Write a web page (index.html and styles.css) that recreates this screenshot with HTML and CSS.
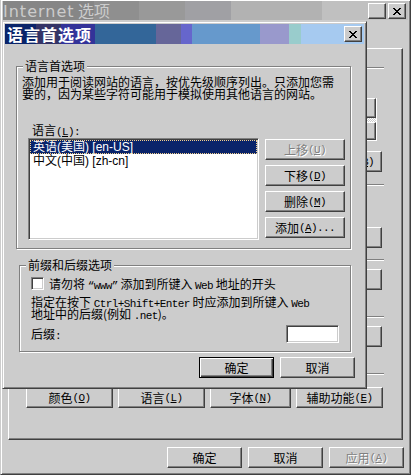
FILE: index.html
```html
<!DOCTYPE html>
<html lang="zh-CN">
<head>
    <meta charset="UTF-8">
    <meta name="viewport" content="width=device-width,initial-scale=1.0">
    <title>Internet 选项</title>
    <link rel="stylesheet" href="styles.css">
</head>
<body>
    <div class="window">
        <div class="caption inactive">
            <span class="caption-text"><span class="latin">Internet</span> 选项</span>
            <div class="caption-buttons">
                <button class="caption-btn help">?</button>
                <button class="caption-btn">
                    <svg class="x-glyph" width="8" height="7" viewBox="0 0 8 7"><path d="M0 0h2v1H0zM6 0h2v1H6zM1 1h2v1H1zM5 1h2v1H5zM2 2h4v1H2zM3 3h2v1H3zM2 4h4v1H2zM1 5h2v1H1zM5 5h2v1H5zM0 6h2v1H0zM6 6h2v1H6z"/></svg>
                </button>
            </div>
        </div>

        <!-- tab strip sits under the language dialog -->
        <div class="tabs"></div>

        <div class="tab-page">
            <div class="etch sep-home"></div>
            <div class="spin">
                <span class="spin-btn"></span>
                <span class="spin-track"></span>
                <span class="spin-btn down"></span>
            </div>
            <button class="btn page-btn btn-blank">使用空白页<span class="en">(<u>B</u>)</span></button>
            <div class="etch sep-files"></div>
            <button class="btn page-btn btn-settings"></button>
            <div class="etch sep-history"></div>
            <button class="btn page-btn btn-near"></button>
            <div class="etch sep-wide"></div>
            <button class="btn page-btn btn-near"></button>
            <div class="etch sep-wide"></div>
            <div class="page-buttons">
                <button class="btn w87">颜色<span class="en">(<u>O</u>)</span></button>
                <button class="btn w87">语言<span class="en">(<u>L</u>)</span></button>
                <button class="btn w81">字体<span class="en">(<u>N</u>)</span></button>
                <button class="btn w87">辅助功能<span class="en">(<u>E</u>)</span></button>
            </div>
        </div>

        <div class="window-buttons">
            <button class="btn w75">确定</button>
            <button class="btn w75">取消</button>
            <button class="btn w75" disabled>应用<span class="en">(<u>A</u>)</span></button>
        </div>

        <div class="dialog">
            <div class="caption active">
                <span class="caption-text">语言首选项</span>
                <button class="caption-btn">
                    <svg class="x-glyph" width="8" height="7" viewBox="0 0 8 7"><path d="M0 0h2v1H0zM6 0h2v1H6zM1 1h2v1H1zM5 1h2v1H5zM2 2h4v1H2zM3 3h2v1H3zM2 4h4v1H2zM1 5h2v1H1zM5 5h2v1H5zM0 6h2v1H0zM6 6h2v1H6z"/></svg>
                </button>
            </div>

            <fieldset class="group group-lang">
                <legend>语言首选项</legend>
                <p class="desc">添加用于阅读网站的语言，按优先级顺序列出。只添加您需<br>要的，因为某些字符可能用于模拟使用其他语言的网站。</p>
                <p class="field-label">语言<span class="en">(<u>L</u>):</span></p>
                <div class="list-row">
                    <ul class="listbox">
                        <li class="selected">英语(美国) [en-US]</li>
                        <li>中文(中国) [zh-cn]</li>
                    </ul>
                    <div class="side-buttons">
                        <button class="btn w80" disabled>上移<span class="en">(<u>U</u>)</span></button>
                        <button class="btn w80">下移<span class="en">(<u>D</u>)</span></button>
                        <button class="btn w80">删除<span class="en">(<u>M</u>)</span></button>
                        <button class="btn w80">添加<span class="en">(<u>A</u>)...</span></button>
                    </div>
                </div>
            </fieldset>

            <fieldset class="group group-suffix">
                <legend>前缀和后缀选项</legend>
                <label class="check-row">
                    <span class="check"></span>
                    <span>请勿将 <span class="en">“www”</span> 添加到所键入 <span class="en">Web</span> 地址的开头</span>
                </label>
                <p class="desc suffix-desc">指定在按下 <span class="en">Ctrl+Shift+Enter</span> 时应添加到所键入 <span class="en">Web</span><br>地址中的后缀(例如 <span class="en">.net</span>)。</p>
                <div class="suffix-row">
                    <span>后缀<span class="en">:</span></span>
                    <span class="textbox"></span>
                </div>
            </fieldset>

            <div class="dialog-buttons">
                <button class="btn w75 default">确定</button>
                <button class="btn w75">取消</button>
            </div>
        </div>
    </div>
</body>
</html>
```

FILE: styles.css
```css
*{
    margin: 0;
    padding: 0;
    box-sizing: border-box;
}
body{
    background: #cccccc;
    font-family: "Noto Sans CJK SC", sans-serif;
    font-size: 12px;
    line-height: 12px;
    color: #000;
}
button{
    font: inherit;
    color: inherit;
}
ul{
    list-style: none;
}
.en{
    font-family: "Liberation Mono", monospace;
    font-size: 11px;
    letter-spacing: -0.6px;
    line-height: 0;
}

/* outer window */
.window{
    position: relative;
    width: 411px;
    height: 475px;
    display: flex;
    flex-direction: column;
    padding: 1px 2px 2px;
    border: 1px solid #404040;
    border-top-width: 0;
    border-left-color: #cccccc;
    box-shadow: inset 1px 1px #fff, inset -1px -1px #808080;
}

.caption{
    display: flex;
    align-items: flex-start;
    justify-content: space-between;
    flex-shrink: 0;
}
.caption.inactive{
    height: 19px;
    color: #cccccc;
    background: linear-gradient(to right, #868686 0 91px, #8f8f8f 91px 136px, #999999 136px 182px, #a0a0a4 182px 228px, #b2b2b2 228px 319px, #c0c0c0 319px);
}
.caption-text{
    font-size: 16px;
    line-height: 19px;
    white-space: nowrap;
}
.caption-text .latin{
    font-family: "DejaVu Sans", sans-serif;
    letter-spacing: 1px;
}
.caption-buttons{
    display: flex;
    gap: 2px;
    margin: 2px 2px 0 0;
}
.caption-btn{
    width: 18px;
    height: 16px;
    display: flex;
    align-items: center;
    justify-content: center;
    background: #cccccc;
    border: 1px solid;
    border-color: #fff #404040 #404040 #fff;
    box-shadow: inset -1px -1px #808080;
}
.caption-btn.help{
    font: bold 13px/1 "Liberation Sans", sans-serif;
}
.x-glyph{
    display: block;
    shape-rendering: crispEdges;
}

.caption.active{
    height: 20px;
    align-items: center;
    color: #fff;
    background: linear-gradient(to right, #0a246a 0 31px, #333366 31px 56px, #333399 56px 90px, #336699 90px 151px, #666699 151px 176px, #6666cc 176px 187px, #6699cc 187px 255px, #9999cc 255px 284px, #99cccc 284px 296px, #a6caf0 296px);
}
.caption.active .caption-text{
    font-weight: bold;
    letter-spacing: 1px;
    line-height: 20px;
    padding-left: 2px;
}
.caption.active .caption-btn{
    margin-right: 2px;
}

/* property sheet page */
.tabs{
    height: 28px;
    flex-shrink: 0;
}
.tab-page{
    height: 392px;
    margin: 0 5px;
    padding: 0 18px 0 10px;
    display: flex;
    flex-direction: column;
    align-items: flex-end;
    border: 1px solid;
    border-color: #fff #404040 #404040 #fff;
    box-shadow: inset -1px -1px #808080;
    flex-shrink: 0;
}
.etch{
    width: 100%;
    height: 2px;
    border-top: 1px solid #808080;
    border-bottom: 1px solid #fff;
    flex-shrink: 0;
}
.sep-home{ margin-top: 18px; }
.sep-files{ margin-top: 12px; }
.sep-history{ margin-top: 11px; }
.sep-wide{ margin-top: 26px; }

.spin{
    width: 40px;
    height: 43px;
    margin: 29px 7px 0 0;
    display: flex;
    flex-direction: column;
    border-right: 1px solid #fff;
    border-bottom: 1px solid #fff;
}
.spin-btn{
    height: 20px;
    background: #cccccc;
    border: 1px solid;
    border-color: #fff #404040 #404040 #fff;
    box-shadow: inset -1px -1px #808080;
}
.spin-btn.down{
    height: 18px;
}
.spin-track{
    height: 4px;
    background: repeating-conic-gradient(#fff 0 25%, #cccccc 0 50%) 0 0 / 2px 2px;
}

.page-btn{
    margin-right: 2px;
}
.btn-blank{ width: 94px; margin-top: 10px; }
.btn-settings{ width: 100px; margin-top: 41px; }
.btn-near{ width: 100px; margin-top: 8px; }
.page-buttons{
    display: flex;
    gap: 5px;
    margin: 12px 1px 0 0;
}
.window-buttons{
    display: flex;
    justify-content: flex-end;
    gap: 6px;
    margin-top: 7px;
    padding-right: 4px;
}

/* buttons */
.btn{
    height: 21px;
    display: flex;
    align-items: center;
    justify-content: center;
    flex-shrink: 0;
    background: #cccccc;
    border: 1px solid;
    border-color: #fff #404040 #404040 #fff;
    box-shadow: inset -1px -1px #808080;
    white-space: nowrap;
}
.btn.default{
    border-color: #000;
    box-shadow: inset 1px 1px #fff, inset -1px -1px #404040, inset -2px -2px #808080;
}
.btn:disabled{
    color: #808080;
    text-shadow: 1px 1px #fff;
}
.w75{ width: 75px; }
.w80{ width: 80px; }
.w81{ width: 81px; }
.w87{ width: 87px; }

/* language dialog */
.dialog{
    position: absolute;
    left: 1px;
    top: 21px;
    width: 365px;
    height: 368px;
    padding: 2px;
    display: flex;
    flex-direction: column;
    background: #cccccc;
    border: 1px solid;
    border-color: #cccccc #404040 #404040 #cccccc;
    box-shadow: inset 1px 1px #fff, inset -1px -1px #808080;
}
.group{
    min-inline-size: 0;
    border: 1px solid #808080;
    box-shadow: inset 1px 1px #fff, 1px 1px #fff;
}
.group legend{
    padding: 0 2px;
    line-height: 12px;
    background: #cccccc;
}
.group-lang{
    margin: 16px 13px 0 11px;
    padding: 4px 5px 8px;
}
.group-lang legend{
    margin-left: 1px;
}
.group-suffix{
    margin: 10px 13px 0 14px;
    padding: 0 11px 8px;
}
.group-suffix legend{
    margin-left: -5px;
}
.field-label{
    margin: 24px 0 0 10px;
}
.list-row{
    display: flex;
    gap: 6px;
    margin: 2px 0 0 6px;
}
.listbox{
    width: 231px;
    height: 102px;
    padding: 1px;
    background: #fff;
    border: 1px solid;
    border-color: #808080 #fff #fff #808080;
    box-shadow: inset 1px 1px #404040, inset -1px -1px #cccccc;
    font-family: "Liberation Sans", "Noto Sans CJK SC", sans-serif;
}
.listbox li{
    height: 14px;
    line-height: 14px;
    padding-left: 3px;
    white-space: nowrap;
}
.listbox li.selected{
    background: #0a246a;
    color: #fff;
    outline: 1px dotted #f2cf8c;
    outline-offset: -1px;
}
.side-buttons{
    display: flex;
    flex-direction: column;
    gap: 5px;
    margin-top: 1px;
}

.check-row{
    height: 13px;
    display: flex;
    align-items: center;
    gap: 5px;
    margin-top: 6px;
    white-space: nowrap;
}
.check{
    width: 13px;
    height: 13px;
    flex-shrink: 0;
    background: #fff;
    border: 1px solid;
    border-color: #808080 #fff #fff #808080;
    box-shadow: inset 1px 1px #404040, inset -1px -1px #cccccc;
}
.suffix-desc{
    margin-top: 6px;
    white-space: nowrap;
}
.suffix-row{
    display: flex;
    align-items: center;
    justify-content: space-between;
    margin-top: 5px;
}
.textbox{
    width: 53px;
    height: 18px;
    background: #fff;
    border: 1px solid;
    border-color: #808080 #fff #fff #808080;
    box-shadow: inset 1px 1px #404040, inset -1px -1px #cccccc;
}
.dialog-buttons{
    display: flex;
    justify-content: flex-end;
    gap: 6px;
    margin: 5px 9px 0 0;
}
```
